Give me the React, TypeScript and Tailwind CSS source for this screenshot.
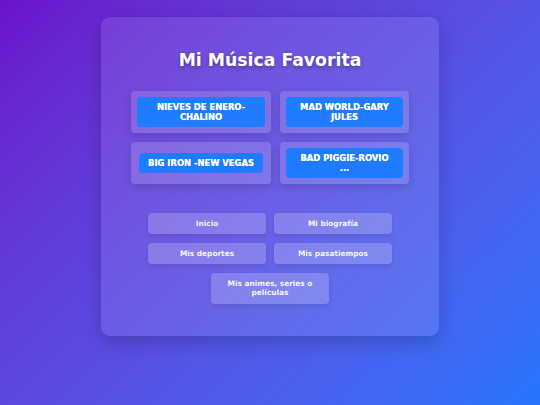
const songs = [
  'NIEVES DE ENERO-CHALINO',
  'MAD WORLD-GARY JULES',
  'BIG IRON -NEW VEGAS',
  'BAD PIGGIE-ROVIO ...',
]

const links = ['Inicio', 'Mi biografía', 'Mis deportes', 'Mis pasatiempos']

export default function App() {
  return (
    <div className="min-h-[405px] w-full bg-linear-135 from-[#6a11cb] to-[#2575fc] pt-[17px] font-['DejaVu_Sans',sans-serif]">
      <div className="mx-auto w-[338px] rounded-[9px] bg-white/10 pt-[33px] pb-[32px] shadow-[0_6px_20px_rgba(0,0,0,0.2)]">
        <h1 className="text-center text-[17.3px] font-bold leading-[20px] text-white [text-shadow:0_2px_4px_rgba(0,0,0,0.3)]">
          Mi Música Favorita
        </h1>

        {/* Songs */}
        <div className="mt-[21px] grid grid-cols-[140px_129px] justify-center gap-[9px]">
          {songs.map((s) => (
            <div
              key={s}
              className="flex h-[42px] items-center justify-center rounded-[4px] bg-white/15 p-[6px] shadow-[0_3px_8px_rgba(0,0,0,0.15)]"
            >
              <button className="w-fit rounded-[4px] bg-[#1f7bff] px-[9.5px] py-[5px] text-center text-[8.4px] font-bold leading-[10px] text-white [text-shadow:0_0_0.4px_#fff]">
                {s}
              </button>
            </div>
          ))}
        </div>

        {/* Nav */}
        <div className="mt-[29px] grid grid-cols-[118px_118px] justify-center gap-x-[8px] gap-y-[9px]">
          {links.map((l) => (
            <button
              key={l}
              className="rounded-[4px] bg-white/20 px-[10px] py-[5.75px] text-center text-[7.4px] font-bold leading-[9.5px] text-white/95 shadow-[0_2px_5px_rgba(0,0,0,0.1)]"
            >
              {l}
            </button>
          ))}
          <button className="col-span-2 mx-auto w-[118px] rounded-[4px] bg-white/20 px-[10px] py-[5.75px] text-center text-[7.4px] font-bold leading-[9.5px] text-white/95 shadow-[0_2px_5px_rgba(0,0,0,0.1)]">
            Mis animes, series o películas
          </button>
        </div>
      </div>
    </div>
  )
}
